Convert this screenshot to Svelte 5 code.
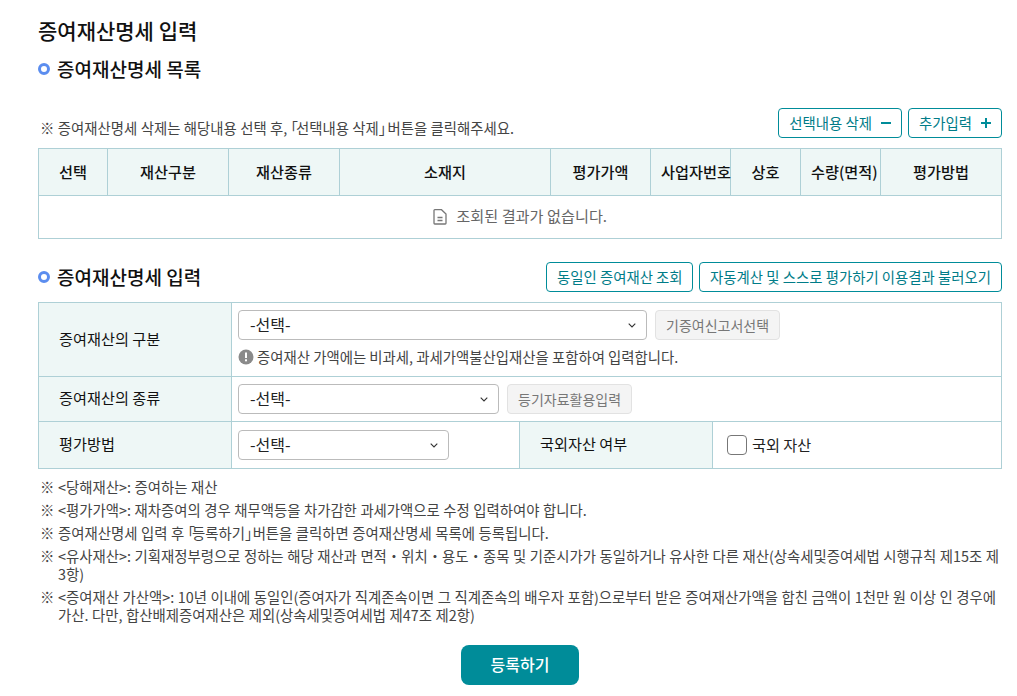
<script>
  const heads = [
    ["선택", 69],
    ["재산구분", 121],
    ["재산종류", 111],
    ["소재지", 211],
    ["평가가액", 100],
    ["사업자번호", 80],
    ["상호", 70],
    ["수량(면적)", 80],
    ["평가방법", 121]
  ];
</script>

<div class="page">
  <h1>증여재산명세 입력</h1>
  <h2 class="sub first"><span class="dot"></span>증여재산명세 목록</h2>

  <div class="list-top">
    <p class="hint">※ 증여재산명세 삭제는 해당내용 선택 후, <span class="br">｢</span>선택내용 삭제<span class="br">｣</span> 버튼을 클릭해주세요.</p>
    <div class="btns">
      <button class="line"><span class="lbl">선택내용 삭제</span>
        <svg width="10" height="10" viewBox="0 0 10 10"><path d="M0 5h10" stroke="#008c99" stroke-width="2" /></svg>
      </button>
      <button class="line"><span class="lbl">추가입력</span>
        <svg width="10" height="10" viewBox="0 0 10 10"><path d="M0 5h10M5 0v10" stroke="#008c99" stroke-width="2" /></svg>
      </button>
    </div>
  </div>

  <table class="grid">
    <colgroup>
      {#each heads as h}
        <col style="width: {h[1]}px" />
      {/each}
    </colgroup>
    <thead>
      <tr>
        {#each heads as h}
          <th>{h[0]}</th>
        {/each}
      </tr>
    </thead>
    <tbody>
      <tr>
        <td colspan="9" class="empty">
          <svg width="14" height="16" viewBox="0 0 14 16" fill="none" stroke="#777" stroke-width="1.3">
            <path d="M1 1.5a.8.8 0 0 1 .8-.8h6.7L13 5v9.2a.8.8 0 0 1-.8.8H1.800a.8.8 0 0 1-.8-.8z" />
            <path d="M4.500 8.500h5M4.500 11.500h5" />
          </svg>
          조회된 결과가 없습니다.
        </td>
      </tr>
    </tbody>
  </table>

  <div class="input-top">
    <h2 class="sub"><span class="dot"></span>증여재산명세 입력</h2>
    <div class="btns">
      <button class="line short"><span class="lbl">동일인 증여재산 조회</span></button>
      <button class="line"><span class="lbl">자동계산 및 스스로 평가하기 이용결과 불러오기</span></button>
    </div>
  </div>

  <table class="form">
    <colgroup>
      <col style="width: 193px" />
      <col style="width: 288px" />
      <col style="width: 193px" />
      <col />
    </colgroup>
    <tbody>
      <tr class="r1">
        <th>증여재산의 구분</th>
        <td colspan="3" class="top">
          <div class="field">
            <div class="select w1"><span class="val">-선택-</span><svg class="chev" width="8" height="5" viewBox="0 0 8 5"><path d="M.7.7 4 4l3.300-3.300" fill="none" stroke="#333" stroke-width="1.100" /></svg></div>
            <button class="gray">기증여신고서선택</button>
          </div>
          <p class="note">
            <svg width="16" height="16" viewBox="0 0 16 16"><circle cx="8" cy="8" r="7.500" fill="#8a8a8a" /><rect x="7" y="3.500" width="2" height="5.500" fill="#fff" /><rect x="7" y="10.300" width="2" height="2" fill="#fff" /></svg>
            증여재산 가액에는 비과세, 과세가액불산입재산을 포함하여 입력합니다.
          </p>
        </td>
      </tr>
      <tr class="r2">
        <th>증여재산의 종류</th>
        <td colspan="3">
          <div class="field">
            <div class="select w2"><span class="val">-선택-</span><svg class="chev" width="8" height="5" viewBox="0 0 8 5"><path d="M.7.7 4 4l3.300-3.300" fill="none" stroke="#333" stroke-width="1.100" /></svg></div>
            <button class="gray">등기자료활용입력</button>
          </div>
        </td>
      </tr>
      <tr class="r3">
        <th>평가방법</th>
        <td>
          <div class="select w3"><span class="val">-선택-</span><svg class="chev" width="8" height="5" viewBox="0 0 8 5"><path d="M.7.7 4 4l3.300-3.300" fill="none" stroke="#333" stroke-width="1.100" /></svg></div>
        </td>
        <th>국외자산 여부</th>
        <td class="chk-cell">
          <label class="chk"><span class="box"></span><span class="val">국외 자산</span></label>
        </td>
      </tr>
    </tbody>
  </table>

  <ul class="notes">
    <li><span class="mark">※</span><span>&lt;당해재산&gt;: 증여하는 재산</span></li>
    <li><span class="mark">※</span><span>&lt;평가가액&gt;: 재차증여의 경우 채무액등을 차가감한 과세가액으로 수정 입력하여야 합니다.</span></li>
    <li><span class="mark">※</span><span>증여재산명세 입력 후 <span class="br">｢</span>등록하기<span class="br">｣</span> 버튼을 클릭하면 증여재산명세 목록에 등록됩니다.</span></li>
    <li><span class="mark">※</span><span>&lt;유사재산&gt;: 기획재정부령으로 정하는 해당 재산과 면적・위치・용도・종목 및 기준시가가 동일하거나 유사한 다른 재산(상속세및증여세법 시행규칙 제15조 제3항)</span></li>
    <li><span class="mark">※</span><span>&lt;증여재산 가산액&gt;: 10년 이내에 동일인(증여자가 직계존속이면 그 직계존속의 배우자 포함)으로부터 받은 증여재산가액을 합친 금액이 1천만 원 이상 인 경우에 가산. 다만, 합산배제증여재산은 제외(상속세및증여세법 제47조 제2항)</span></li>
  </ul>

  <div class="submit-row">
    <button class="submit"><span class="lbl">등록하기</span></button>
  </div>
</div>

<style>
  :global(body) {
    margin: 0;
    background: #fff;
  }

  .page {
    box-sizing: border-box;
    width: 1017px;
    height: 696px;
    overflow: hidden;
    padding: 16px 15px 0 38px;
    font-family: "Noto Sans CJK KR", "Noto Sans", sans-serif;
    font-size: 14.4px;
    color: #222;
  }

  h1 {
    margin: 0;
    font-size: 21px;
    line-height: 28px;
    font-weight: 500;
    color: #111;
  }

  .sub {
    display: flex;
    align-items: center;
    margin: 0;
    font-size: 19px;
    line-height: 26px;
    font-weight: 500;
    color: #111;
  }

  .first {
    margin-top: 12px;
  }

  .dot {
    box-sizing: border-box;
    width: 12px;
    height: 12px;
    margin-right: 7px;
    border: 3px solid #5b8def;
    border-radius: 50%;
    background: #fff;
  }

  .list-top {
    display: flex;
    justify-content: space-between;
    align-items: flex-end;
    height: 30px;
    margin-top: 26px;
    margin-bottom: 10px;
  }

  .hint {
    margin: 0 0 0 2px;
    font-size: 14.4px;
    line-height: 20px;
    word-spacing: 0.2px;
    color: #444;
  }

  .br {
    letter-spacing: -2px;
  }

  .btns {
    display: flex;
    gap: 6px;
  }

  button {
    font-family: inherit;
    cursor: pointer;
  }

  .line {
    display: flex;
    align-items: center;
    gap: 9px;
    box-sizing: border-box;
    height: 30px;
    padding: 0 10px;
    border: 1px solid #008c99;
    border-radius: 4px;
    background: #fff;
    color: #007c88;
    font-size: 14.4px;
    white-space: nowrap;
  }

  .short {
    padding: 0 9.5px;
  }

  .lbl {
    position: relative;
    top: -1px;
  }

  table {
    border-collapse: collapse;
    table-layout: fixed;
    width: 963px;
  }

  .form {
    width: 964px;
  }

  th,
  td {
    border: 1px solid #aed0d6;
    padding: 0;
  }

  th {
    padding-bottom: 2px;
    background: #eef7f6;
    font-weight: 500;
    color: #111;
  }

  .grid thead tr {
    height: 47px;
  }

  .grid th {
    padding-left: 10px;
    padding-right: 10px;
    font-size: 15.2px;
    white-space: nowrap;
  }

  .empty {
    height: 38px;
    padding-bottom: 4px;
    text-align: center;
    color: #666;
    font-size: 15.2px;
  }

  .empty svg {
    vertical-align: -3px;
    margin-right: 6px;
  }

  .input-top {
    display: flex;
    justify-content: space-between;
    align-items: center;
    height: 30px;
    margin-top: 23px;
    margin-bottom: 10px;
  }

  .form th {
    text-align: left;
    padding-left: 20px;
    padding-bottom: 4px;
    font-weight: 400;
    font-size: 15.2px;
  }

  .form td {
    padding: 0 6px;
  }

  .form td.top {
    vertical-align: top;
    padding-top: 7px;
  }

  .r1 {
    height: 74px;
  }

  .r2 {
    height: 45px;
  }

  .r3 {
    height: 47px;
  }

  .field {
    display: flex;
    align-items: center;
    gap: 8px;
  }

  .select {
    display: flex;
    align-items: center;
    justify-content: space-between;
    box-sizing: border-box;
    height: 30px;
    padding: 0 10px 0 11px;
    border: 1px solid #bbb;
    border-radius: 4px;
    background: #fff;
    color: #222;
    font-size: 16px;
  }

  .val {
    position: relative;
    top: -1px;
  }

  .w1 {
    width: 409px;
  }

  .w2 {
    width: 261px;
  }

  .w3 {
    width: 211px;
  }

  .gray {
    box-sizing: border-box;
    height: 30px;
    padding: 0 10px;
    border: 1px solid #e2e2e2;
    border-radius: 4px;
    background: #f4f4f4;
    color: #777;
    font-size: 14px;
  }

  .note {
    display: flex;
    align-items: center;
    gap: 3px;
    margin: 7px 0 0;
    line-height: 20px;
    font-size: 14.4px;
    color: #444;
  }

  .form .chk-cell {
    padding-left: 14px;
  }

  .chk {
    display: flex;
    align-items: center;
    gap: 5px;
    color: #222;
    font-size: 15.2px;
  }

  .box {
    box-sizing: border-box;
    width: 20px;
    height: 20px;
    border: 1px solid #777;
    border-radius: 4px;
    background: #fff;
  }

  .notes {
    margin: 9px 0 0;
    padding: 0;
    list-style: none;
    font-size: 14.4px;
    line-height: 18px;
    word-spacing: 0.3px;
    color: #444;
  }

  .notes li {
    display: flex;
    margin-bottom: 5px;
  }

  .notes .br {
    letter-spacing: -3px;
  }

  .mark {
    flex: none;
    width: 20px;
    padding-left: 2px;
    box-sizing: border-box;
  }

  .submit-row {
    display: flex;
    justify-content: center;
    margin-top: 21px;
  }

  .submit {
    width: 118px;
    height: 40px;
    border: 0;
    border-radius: 8px;
    background: #008c99;
    color: #fff;
    font-size: 16px;
    font-weight: 500;
  }
</style>
